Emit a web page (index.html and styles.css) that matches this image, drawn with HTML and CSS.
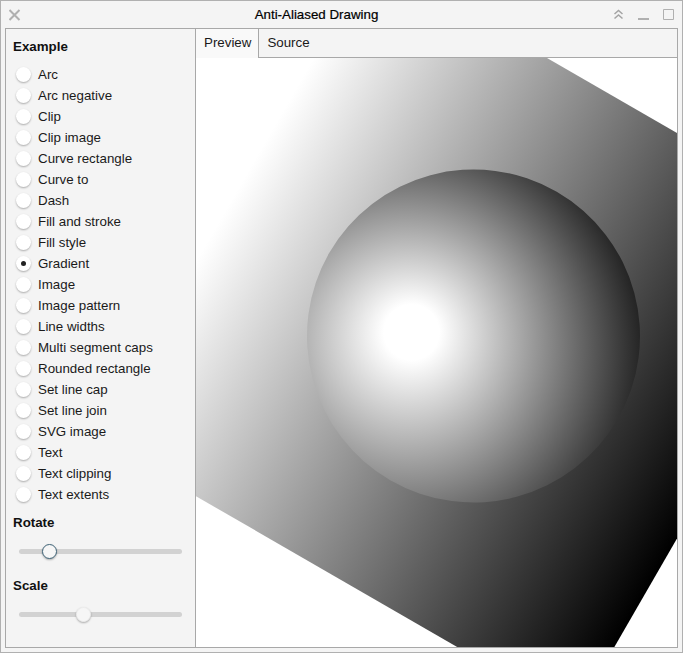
FILE: index.html
```html
<!DOCTYPE html>
<html>
  <head>
    <title>Anti-Aliased Drawing</title>
    <link rel="stylesheet" href="styles.css">
  </head>
  <body>
    <div class="window">
      <div class="titlebar">
        <svg class="close-icon" width="12" height="12" viewBox="0 0 12 12">
          <path d="M0.5 1 L10.5 11 M10.5 1 L0.5 11" />
        </svg>
        <div class="title">Anti-Aliased Drawing</div>
        <div class="window-buttons">
          <svg class="shade-icon" width="11" height="11" viewBox="0 0 11 11">
            <path d="M1.5 5 L5.5 1.5 L9.5 5 M1.5 9.5 L5.5 6 L9.5 9.5" />
          </svg>
          <svg width="12" height="11" viewBox="0 0 12 11">
            <path class="thick" d="M1 10 H12" />
          </svg>
          <svg width="12" height="11" viewBox="0 0 12 11">
            <path d="M1.5 0.5 H11.5 V10.5 H1.5 Z" />
          </svg>
        </div>
      </div>

      <div class="frame">
        <div class="sidebar">
          <h2>Example</h2>
          <form class="examples">
            <label><input type="radio" name="example" />Arc</label>
            <label><input type="radio" name="example" />Arc negative</label>
            <label><input type="radio" name="example" />Clip</label>
            <label><input type="radio" name="example" />Clip image</label>
            <label><input type="radio" name="example" />Curve rectangle</label>
            <label><input type="radio" name="example" />Curve to</label>
            <label><input type="radio" name="example" />Dash</label>
            <label><input type="radio" name="example" />Fill and stroke</label>
            <label><input type="radio" name="example" />Fill style</label>
            <label><input type="radio" name="example" checked />Gradient</label>
            <label><input type="radio" name="example" />Image</label>
            <label><input type="radio" name="example" />Image pattern</label>
            <label><input type="radio" name="example" />Line widths</label>
            <label><input type="radio" name="example" />Multi segment caps</label>
            <label><input type="radio" name="example" />Rounded rectangle</label>
            <label><input type="radio" name="example" />Set line cap</label>
            <label><input type="radio" name="example" />Set line join</label>
            <label><input type="radio" name="example" />SVG image</label>
            <label><input type="radio" name="example" />Text</label>
            <label><input type="radio" name="example" />Text clipping</label>
            <label><input type="radio" name="example" />Text extents</label>
          </form>
          <h2 class="rotate-heading">Rotate</h2>
          <input class="slider focused" type="range" min="0" max="100" step="0.1" value="15.7" />
          <h2 class="scale-heading">Scale</h2>
          <input class="slider" type="range" min="0" max="100" step="0.1" value="38.5" />
        </div>

        <div class="main">
          <div class="tabs">
            <div class="tab active">Preview</div>
            <div class="tab">Source</div>
          </div>
          <svg class="canvas" width="481" height="589" viewBox="0 0 481 589">
            <defs>
              <linearGradient id="linear" gradientUnits="userSpaceOnUse" x1="0" y1="0" x2="0" y2="256">
                <stop offset="0" stop-color="#fff" />
                <stop offset="1" stop-color="#000" />
              </linearGradient>
              <radialGradient id="radial" gradientUnits="userSpaceOnUse" fx="115.2" fy="102.4" fr="12.8" cx="102.4" cy="102.4" r="128">
                <stop offset="0" stop-color="#fff" />
                <stop offset="1" stop-color="#000" />
              </radialGradient>
            </defs>
            <g transform="translate(277.5 278) rotate(-60) scale(2.168) translate(-128 -128)">
              <rect width="256" height="256" fill="url(#linear)" />
              <circle cx="128" cy="128" r="76.8" fill="url(#radial)" />
            </g>
          </svg>
        </div>
      </div>
    </div>
  </body>
</html>
```

FILE: styles.css
```css
body {
  margin: 0;
  font-family: "Liberation Sans", Arial, sans-serif;
  font-size: 13.33px;
  color: #1a1a1a;
}

.window {
  width: 683px;
  height: 653px;
  box-sizing: border-box;
  border: 1px solid #b0b0b0;
  background: #f4f4f4;
  display: flex;
  flex-direction: column;
}

.titlebar {
  height: 27px;
  flex: none;
  display: flex;
  align-items: center;
  padding: 0 8px;
}

.titlebar svg {
  fill: none;
  stroke: #b0b0b0;
  stroke-width: 1;
}

.titlebar .shade-icon {
  stroke: #a4a4a4;
  stroke-width: 1.5;
}

.close-icon path {
  stroke-width: 2;
}

.thick {
  stroke-width: 2;
}

.title {
  flex: 1;
  text-align: center;
  color: #000;
  -webkit-text-stroke: 0.2px #000;
  padding-left: 0;
  padding-right: 1px;
}

.window-buttons {
  display: flex;
  gap: 13px;
}

.frame {
  flex: 1;
  margin: 0 4px 4px 4px;
  border: 1px solid #a8a8a8;
  display: flex;
  min-height: 0;
}

.sidebar {
  flex: none;
  border-right: 1px solid #a8a8a8;
  padding: 0 0 0 7px;
  width: 182px;
}

h2 {
  margin: 0;
  font-size: 13.33px;
  font-weight: bold;
  color: #111;
}

.sidebar > h2:first-child {
  padding-top: 10px;
  line-height: 15px;
}

.examples {
  display: flex;
  flex-direction: column;
  margin-top: 10px;
}

.examples label {
  display: flex;
  align-items: center;
  height: 21px;
  gap: 7px;
  padding-left: 3px;
}

.examples input {
  appearance: none;
  width: 15px;
  height: 15px;
  margin: 0;
  border-radius: 50%;
  background: #fff;
  box-shadow: 0 1px 2px rgba(0, 0, 0, 0.3);
  display: grid;
  place-items: center;
}

.examples input:checked::before {
  content: "";
  width: 5px;
  height: 5px;
  border-radius: 50%;
  background: #222;
}

.rotate-heading {
  margin-top: 10px;
  line-height: 15px;
}

.scale-heading {
  margin-top: 19px;
  line-height: 15px;
}

.slider {
  appearance: none;
  display: block;
  width: 163px;
  height: 16px;
  margin: 13px 0 0 6px;
  background: transparent;
}

.slider::-webkit-slider-runnable-track {
  height: 5px;
  border-radius: 3px;
  background: #d2d2d2;
}

.slider::-webkit-slider-thumb {
  appearance: none;
  width: 13px;
  height: 13px;
  margin-top: -5px;
  border: 1px solid #eee;
  border-radius: 50%;
  background: #f6f6f6;
  box-shadow: 0 1px 2px rgba(0, 0, 0, 0.3);
  box-sizing: content-box;
}

.slider.focused::-webkit-slider-thumb {
  border-color: #3f6478;
}

.main {
  flex: 1;
  min-width: 0;
  display: flex;
  flex-direction: column;
}

.tabs {
  display: flex;
  height: 28px;
  flex: none;
  border-bottom: 1px solid #a8a8a8;
}

.tab {
  padding: 0 8px;
  line-height: 28px;
}

.tab.active {
  height: 29px;
  padding-right: 7px;
  background: #f9f9f9;
  border-right: 1px solid #a8a8a8;
}

.canvas {
  display: block;
  background: #fff;
}
```
